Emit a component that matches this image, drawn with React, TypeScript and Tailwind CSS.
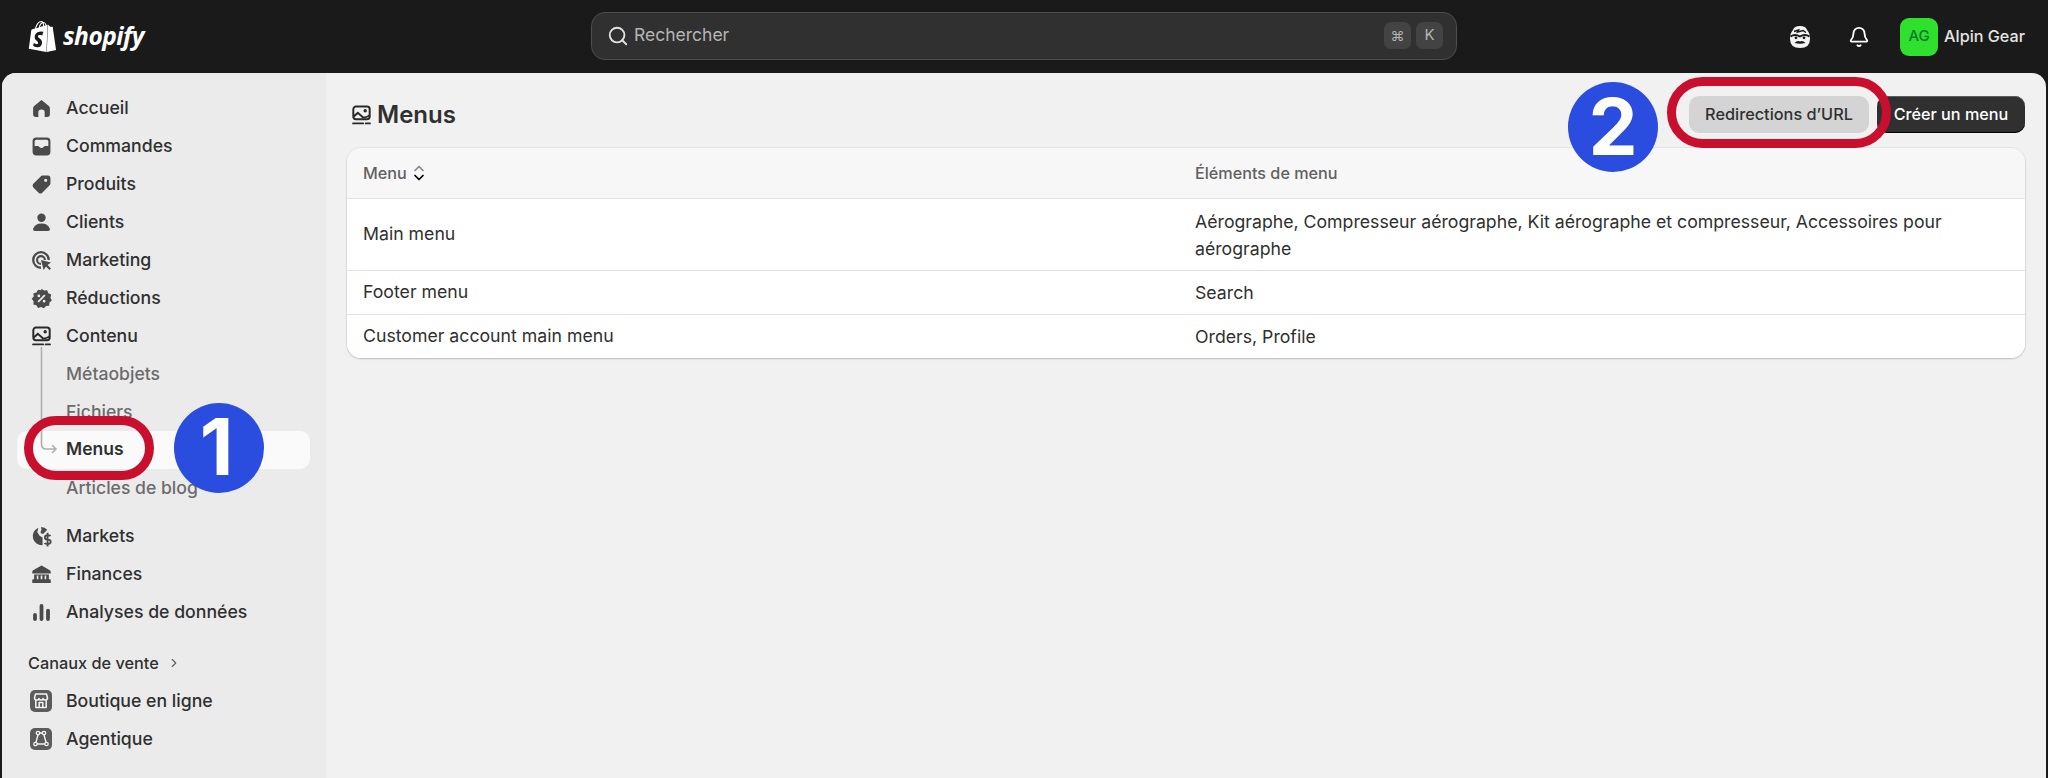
import { SiShopify } from "react-icons/si";
import { ChevronRight, Search, Bell } from "lucide-react";
import type { ReactNode } from "react";

const fill = "#4a4a4a";

function Ico({ children, size = 21 }: { children: ReactNode; size?: number }) {
  return (
    <svg width={size} height={size} viewBox="0 0 20 20" fill={fill}>
      {children}
    </svg>
  );
}

const HomeIcon = () => (
  <Ico>
    <path d="M10 2 L17 7.5 Q18 8.3 18 10 V15.5 Q18 18 15.5 18 H13 V13.5 Q13 11 10 11 Q7 11 7 13.5 V18 H4.5 Q2 18 2 15.5 V10 Q2 8.3 3 7.5 Z" />
  </Ico>
);
const InboxIcon = () => (
  <Ico>
    <path fillRule="evenodd" d="M5 1.5 H15 Q18.5 1.5 18.5 5 V15 Q18.5 18.5 15 18.5 H5 Q1.5 18.5 1.5 15 V5 Q1.5 1.5 5 1.5 Z M5 3.5 Q3.5 3.5 3.5 5 V9.5 H6.5 Q7.5 9.5 8 10.5 Q8.6 11.5 10 11.5 Q11.4 11.5 12 10.5 Q12.5 9.5 13.5 9.5 H16.5 V5 Q16.5 3.5 15 3.5 Z" />
  </Ico>
);
const TagIcon = () => (
  <Ico>
    <path fillRule="evenodd" d="M11 1.5 H16 Q18.5 1.5 18.5 4 V9 Q18.5 10 17.5 11 L10.5 18 Q9 19 7.5 18 L2 12.5 Q1 11 2 9.5 L9 2.5 Q10 1.5 11 1.5 Z M14 4.5 A1.5 1.5 0 1 0 14 7.5 A1.5 1.5 0 1 0 14 4.5 Z" />
  </Ico>
);
const PersonIcon = () => (
  <Ico>
    <circle cx="10" cy="5.5" r="4" />
    <path d="M10 11 Q16 11 18 16 Q18.5 18 16.5 18 H3.5 Q1.5 18 2 16 Q4 11 10 11 Z" />
  </Ico>
);
const TargetIcon = () => (
  <Ico>
    <path d="M9.5 1 A8.5 8.5 0 0 1 18 9.5 L15.8 9.5 A6.3 6.3 0 1 0 9.5 15.8 L9.5 18 A8.5 8.5 0 0 1 9.5 1 Z" />
    <path d="M9.5 4.8 A4.7 4.7 0 0 1 14.2 9.5 L12.2 9.5 A2.7 2.7 0 1 0 9.5 12.2 L9.5 14.2 A4.7 4.7 0 0 1 9.5 4.8 Z" />
    <path d="M9.5 9.5 L19 12 L15.8 14.2 L19 17.6 L17.6 19 L14.3 15.7 L12 19 Z" />
  </Ico>
);
const DiscountIcon = () => (
  <Ico>
    <path fillRule="evenodd" d="M10 0.6 L12.4 2.3 L15.4 2.1 L16.5 4.9 L19.2 6.2 L18.5 9.2 L19.8 11.9 L17.6 13.9 L17.3 16.9 L14.3 17.2 L12.2 19.4 L9.6 18.1 L6.7 19 L5.2 16.4 L2.3 15.6 L2.5 12.6 L0.6 10.2 L2.6 8 L2.3 5 L5.2 4.2 L6.7 1.6 L9.6 2.1 Z M12.6 6.2 L6.2 12.6 L7.4 13.8 L13.8 7.4 Z M7.5 6.2 A1.3 1.3 0 1 0 7.5 8.8 A1.3 1.3 0 1 0 7.5 6.2 Z M12.5 11.2 A1.3 1.3 0 1 0 12.5 13.8 A1.3 1.3 0 1 0 12.5 11.2 Z" />
  </Ico>
);
const ContentIcon = ({ color = "#2a2a2a" }: { color?: string }) => (
  <svg width="21" height="21" viewBox="0 0 20 20" fill="none" stroke={color} strokeWidth="1.9">
    <rect x="2.2" y="1.5" width="15.6" height="12" rx="2.5" />
    <path d="M2.5 11 L6.5 7.5 L11 11.5 Q13 12.8 17.5 10" />
    <circle cx="13.5" cy="5.5" r="0.7" fill={color} />
    <path d="M2 17.5 H11.5 M14 17.5 H18" strokeLinecap="round" />
  </svg>
);
const GlobeIcon = () => (
  <Ico>
    <path d="M9.5 1 A8.5 8.5 0 0 1 15.5 3.5 L11.5 7.5 Q9.5 7.5 9 6 L10 3.5 Z M7 1.6 L6 6 L8.2 9.2 L11 11 L11 18.3 A8.7 8.7 0 0 1 7 1.6 Z" />
    <path d="M15.8 6.5 V19.5 M18.6 9.6 Q18 8.8 15.8 8.8 Q13.2 8.8 13.2 11 Q13.2 12.9 15.8 13 Q18.8 13.1 18.8 15.1 Q18.8 17.2 15.8 17.2 Q13.6 17.2 12.9 16.2" fill="none" stroke={fill} strokeWidth="1.7" />
  </Ico>
);
const BankIcon = () => (
  <Ico>
    <path fillRule="evenodd" d="M10 1.5 L18 6 Q18.8 6.6 18.8 7.5 V9 H1.2 V7.5 Q1.2 6.6 2 6 Z M3 10 H17 V14.5 H18 Q18.8 14.5 18.8 15.5 V18 H1.2 V15.5 Q1.2 14.5 2 14.5 H3 Z M5.5 11 V14.5 H7 V11 Z M9.2 11 V14.5 H10.8 V11 Z M13 11 V14.5 H14.5 V11 Z" />
  </Ico>
);
const BarsIcon = () => (
  <Ico>
    <rect x="2" y="10.5" width="3.6" height="7.5" rx="1.8" />
    <rect x="8.2" y="2" width="3.6" height="16" rx="1.8" />
    <rect x="14.4" y="6.5" width="3.6" height="11.5" rx="1.8" />
  </Ico>
);
const StoreIcon = () => (
  <svg width="22" height="22" viewBox="0 0 22 22" fill="none">
    <rect width="22" height="22" rx="5" fill="#5c5c5c" />
    <path d="M4.5 8 L5.5 4 H16.5 L17.5 8 Q17.5 10 15.2 10 Q13 10 13 8.5 Q13 10 11 10 Q9 10 9 8.5 Q9 10 6.8 10 Q4.5 10 4.5 8 Z M5.8 10 V17.5 H16.2 V10 M9.2 17.5 V12.5 H12.8 V17.5" stroke="#f4f4f4" strokeWidth="1.5" strokeLinejoin="round" />
  </svg>
);
const AgentIcon = () => (
  <svg width="22" height="22" viewBox="0 0 22 22" fill="none">
    <rect width="22" height="22" rx="5" fill="#5c5c5c" />
    <path d="M8.5 5 H13.5 L16.5 16 H5.5 Z" stroke="#f4f4f4" strokeWidth="1.4" />
    <g fill="#5c5c5c" stroke="#f4f4f4" strokeWidth="1.3">
      <circle cx="8" cy="5" r="1.7" />
      <circle cx="14" cy="5" r="1.7" />
      <circle cx="5.5" cy="16" r="1.7" />
      <circle cx="16.5" cy="16" r="1.7" />
    </g>
  </svg>
);
const FaceIcon = () => (
  <svg width="22" height="24" viewBox="0 0 22 24" fill="none">
    <path d="M4 5 Q5 1 11 1 Q17 1 18 5 Q21 8 21 14 Q21 23 11 23 Q1 23 1 14 Q1 8 4 5 Z" fill="#f4f4f4" />
    <path d="M5 6.5 L9.5 5 L8.5 7 L14 5.5 L17 7.5" stroke="#1a1a1a" strokeWidth="1.5" />
    <path d="M1.5 11.5 Q6 8.5 11 11.5 Q16 8.5 20.5 11.5" stroke="#1a1a1a" strokeWidth="2" />
    <circle cx="7" cy="12.8" r="1.4" fill="#1a1a1a" />
    <circle cx="15" cy="12.8" r="1.4" fill="#1a1a1a" />
    <path d="M5.5 18 Q8.5 15 11 16.5 Q13.5 15 16.5 18 Q11 19.5 5.5 18 Z" fill="#1a1a1a" />
  </svg>
);

function NavItem({ icon, label }: { icon: ReactNode; label: string }) {
  return (
    <div className="flex h-[38px] items-center">
      <div className="flex w-[64px] shrink-0 justify-center pl-[14px]">{icon}</div>
      <span className="text-[17.7px] font-medium text-[#303030]">{label}</span>
    </div>
  );
}

function SubItem({ label }: { label: string }) {
  return (
    <div className="flex h-[38px] items-center pl-[64px]">
      <span className="text-[17.6px] font-[450] text-[#6b6b6b]">{label}</span>
    </div>
  );
}

function Sidebar() {
  return (
    <aside className="flex w-[324px] shrink-0 flex-col bg-[#ebebeb] pt-[16px]">
      <NavItem icon={<HomeIcon />} label="Accueil" />
      <NavItem icon={<InboxIcon />} label="Commandes" />
      <NavItem icon={<TagIcon />} label="Produits" />
      <NavItem icon={<PersonIcon />} label="Clients" />
      <NavItem icon={<TargetIcon />} label="Marketing" />
      <NavItem icon={<DiscountIcon />} label="Réductions" />
      <NavItem icon={<ContentIcon />} label="Contenu" />
      <div className="relative">
        <SubItem label="Métaobjets" />
        <SubItem label="Fichiers" />
        <div className="ml-[15px] mr-[16px] flex h-[38px] items-center rounded-[10px] bg-[#fafafa] pl-[49px]">
          <span className="pb-[1px] text-[17.5px] font-semibold text-[#303030]">Menus</span>
        </div>
        <SubItem label="Articles de blog" />
        {/* trait qui relie les sous-menus */}
        <svg className="absolute left-[38px] top-[-8px]" width="20" height="112" viewBox="0 0 20 112" fill="none" stroke="#b0b0b0" strokeWidth="1.6">
          <path d="M1.5 0 V97 Q1.5 102 6 102 H16 M12 98 L16 102 L12 106" />
        </svg>
      </div>
      <div className="mt-[10px]">
        <NavItem icon={<GlobeIcon />} label="Markets" />
        <NavItem icon={<BankIcon />} label="Finances" />
        <NavItem icon={<BarsIcon />} label="Analyses de données" />
      </div>
      <div className="mt-[13px] flex h-[38px] items-center gap-[8px] pl-[26px] text-[#303030]">
        <span className="text-[16.3px] font-medium">Canaux de vente</span>
        <ChevronRight size={14} color="#616161" />
      </div>
      <NavItem icon={<StoreIcon />} label="Boutique en ligne" />
      <NavItem icon={<AgentIcon />} label="Agentique" />
    </aside>
  );
}

function TopBar() {
  return (
    <header className="relative flex h-[73px] items-center bg-[#1a1a1a] pl-[27px] pr-[23px]">
      <div className="flex w-[564px] shrink-0 items-center gap-[5px] text-white">
        <SiShopify size={31} />
        <span className="text-[24.5px] font-bold italic leading-none tracking-[-0.5px] [font-family:'Open_Sans',sans-serif]">shopify</span>
      </div>
      <div className="mb-[2px] flex h-[48px] w-[866px] items-center rounded-[14px] border border-[#4d4d4d] bg-[#303030] pl-[15px] pr-[13px]">
        <Search size={22} color="#e3e3e3" strokeWidth={2} />
        <span className="ml-[5px] flex-1 text-[17.5px] text-[#b5b5b5]">Rechercher</span>
        <div className="flex gap-[5px]">
          <span className="flex h-[27px] w-[27px] items-center justify-center rounded-[7px] bg-[#434343] text-[14px] text-[#b5b5b5]">⌘</span>
          <span className="flex h-[27px] w-[27px] items-center justify-center rounded-[7px] bg-[#434343] text-[15px] text-[#b5b5b5]">K</span>
        </div>
      </div>
      <div className="ml-auto flex items-center">
        <FaceIcon />
        <Bell size={22} color="#fff" strokeWidth={2} className="ml-[37px]" />
        <div className="ml-[30px] flex h-[38px] w-[38px] items-center justify-center rounded-[9px] bg-[#2fe02f] text-[15px] font-medium text-[#117a2a]">AG</div>
        <span className="ml-[6px] text-[16.2px] font-medium text-[#e3e3e3]">Alpin Gear</span>
      </div>
    </header>
  );
}

function Row({ name, items, tall }: { name: string; items: ReactNode; tall?: boolean }) {
  return (
    <div className={`flex items-center border-t border-[#e3e3e3] bg-white ${tall ? "h-[72px]" : "h-[44px]"}`}>
      <div className="w-[848px] shrink-0 pl-[16px] text-[17.7px] text-[#303030]">{name}</div>
      <div className="flex-1 pr-[60px] text-[17.7px] leading-[27px] text-[#303030]">{items}</div>
    </div>
  );
}

function Annotation({ n, className }: { n: string; className: string }) {
  return (
    <div className={`absolute flex h-[90px] w-[90px] items-center justify-center rounded-full bg-[#2a4de0] text-[78px] font-bold leading-none text-white ${className}`}>
      {n}
    </div>
  );
}

export default function App() {
  return (
    <div className="relative h-[778px] w-[2048px] overflow-hidden bg-[#1a1a1a] [font-family:Inter,sans-serif]">
      <TopBar />
      <div className="mx-[2px] flex h-[705px] overflow-hidden rounded-t-[14px] bg-[#f1f1f1]">
        <Sidebar />
        <main className="min-w-0 flex-1 pl-[21px] pr-[21px]">
          <div className="flex h-[75px] items-center justify-between pt-[7px]">
            <div className="flex items-center gap-[5px] pl-[4px] pt-[2px]">
              <ContentIcon />
              <h1 className="text-[24px] font-semibold text-[#303030]">Menus</h1>
            </div>
            <div className="flex gap-[8px]">
              <button className="flex h-[37px] w-[180px] items-center justify-center rounded-[10px] bg-[#d4d4d4] text-[16.3px] font-medium text-[#303030]">Redirections d’URL</button>
              <button className="flex h-[37px] w-[148px] items-center justify-center rounded-[10px] bg-[#303030] text-[16.2px] font-medium text-white shadow-[inset_0_1px_0_#5c5c5c,inset_0_-1px_0_#000]">Créer un menu</button>
            </div>
          </div>
          <div className="overflow-hidden rounded-[14px] shadow-[0_1px_2px_rgba(0,0,0,0.2),0_0_0_1px_rgba(0,0,0,0.04)]">
            <div className="flex h-[50px] items-center bg-[#f7f7f7] text-[16.2px] font-medium text-[#616161]">
              <div className="flex w-[848px] shrink-0 items-center gap-[6px] pl-[16px]">
                Menu
                <svg width="12" height="16" viewBox="0 0 12 16" fill="none" strokeWidth="1.7" strokeLinecap="round" strokeLinejoin="round">
                  <path d="M2 5.5 L6 1.5 L10 5.5" stroke="#8a8a8a" />
                  <path d="M2 10.5 L6 14.5 L10 10.5" stroke="#000" />
                </svg>
              </div>
              <div>Éléments de menu</div>
            </div>
            <Row name="Main menu" tall items="Aérographe, Compresseur aérographe, Kit aérographe et compresseur, Accessoires pour aérographe" />
            <Row name="Footer menu" items="Search" />
            <Row name="Customer account main menu" items="Orders, Profile" />
          </div>
        </main>
      </div>

      {/* annotations posées par-dessus la capture */}
      <div className="absolute left-[24px] top-[416px] h-[64px] w-[130px] rounded-[32px] border-[9px] border-[#c8102e]" />
      <Annotation n="1" className="left-[174px] top-[403px] pb-[3px] pr-[5px]" />
      <div className="absolute left-[1667px] top-[77px] h-[71px] w-[224px] rounded-[36px] border-[9px] border-[#c8102e]" />
      <Annotation n="2" className="left-[1568px] top-[82px]" />
    </div>
  );
}
